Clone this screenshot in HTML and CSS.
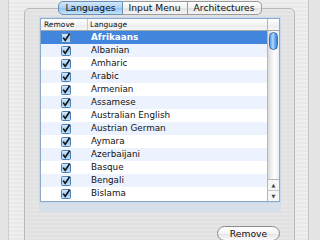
FILE: index.html
```html
<!DOCTYPE html>
<html lang="en">
<head>
    <meta charset="UTF-8">
    <title>Languages</title>
    <link rel="stylesheet" href="styles.css">
</head>
<body>
    <div class="sheet">
        <div class="tab-panel">
            <div class="tabs">
                <div class="tab selected">Languages</div>
                <div class="tab">Input Menu</div>
                <div class="tab">Architectures</div>
            </div>

            <div class="scroll-view">
                <div class="table-area">
                    <div class="table-header">
                        <div class="col-remove">Remove</div>
                        <div class="col-language">Language</div>
                    </div>
                    <div class="rows" id="rows">
                        <!-- rows are filled in below -->
                    </div>
                </div>
                <div class="scrollbar">
                    <div class="scroll-corner"></div>
                    <div class="scroll-track">
                        <div class="scroll-thumb"></div>
                    </div>
                    <div class="scroll-arrows">
                        <div class="arrow">&#9650;</div>
                        <div class="arrow">&#9660;</div>
                    </div>
                </div>
            </div>

            <div class="button-row">
                <button class="push-button">Remove</button>
            </div>
        </div>
    </div>

<script>
    // Language list shown in the table
    const languages = [
        'Afrikaans', 'Albanian', 'Amharic', 'Arabic', 'Armenian', 'Assamese',
        'Australian English', 'Austrian German', 'Aymara', 'Azerbaijani',
        'Basque', 'Bengali', 'Bislama'
    ];

    const checkbox = '<svg width="10" height="10" viewBox="0 0 10 10">' +
        '<defs><linearGradient id="cb" x1="0" y1="0" x2="0" y2="1">' +
        '<stop offset="0" stop-color="#e2f1fd"/><stop offset="0.5" stop-color="#9ccaf2"/>' +
        '<stop offset="1" stop-color="#c4e3fc"/></linearGradient></defs>' +
        '<rect x="0.5" y="0.5" width="9" height="9" rx="1" fill="url(#cb)" stroke="#4f7fb3"/>' +
        '<path d="M2.2 4.6 L4.2 7.4 L8.6 0.8" fill="none" stroke="#111" stroke-width="1.6"/>' +
        '</svg>';

    const rowsElement = document.getElementById('rows');

    languages.forEach(function (name, index) {
        const row = document.createElement('div');
        row.className = 'row' + (index === 0 ? ' selected' : '') + (index % 2 === 1 ? ' odd' : '');
        row.innerHTML = '<div class="col-remove">' + checkbox + '</div>' +
            '<div class="col-language">' + name + '</div>';
        rowsElement.appendChild(row);
    });
</script>
</body>
</html>
```

FILE: styles.css
```css
/* System Preferences style language pane */
body {
    margin: 0;
    padding: 0;
    width: 320px;
    height: 240px;
    overflow: hidden;
    font-family: 'DejaVu Sans', sans-serif;
    font-size: 8.8px;
    color: #111;
    background-color: #e4e4e4;
}

.sheet {
    margin-left: 8px;
    width: 301px;
    height: 240px;
    box-sizing: border-box;
    border-left: 1px solid #cdcdcd;
    border-right: 1px solid #c4c4c4;
    padding: 8px 13px 0 15px;
    background: repeating-linear-gradient(#efefef 0, #efefef 2px, #e9e9e9 2px, #e9e9e9 4px);
}

.tab-panel {
    height: 240px;
    border: 1px solid #b9b9b9;
    border-radius: 5px;
    background: repeating-linear-gradient(#e6e6e6 0, #e6e6e6 2px, #e1e1e1 2px, #e1e1e1 4px);
    padding: 0 14px 0 15px;
}

.tabs {
    display: flex;
    justify-content: center;
    margin-top: -8px;
}

.tab {
    height: 12px;
    line-height: 12px;
    padding: 0 6px;
    font-size: 9.2px;
    border: 1px solid #9a9a9a;
    border-left: none;
    background: linear-gradient(#ffffff, #f1f1f1 50%, #e2e2e2 51%, #f4f4f4);
}

.tab:first-child {
    border-left: 1px solid #8a8a8a;
    border-radius: 5px 0 0 5px;
}

.tab:last-child {
    border-radius: 0 5px 5px 0;
}

.tab.selected {
    background: linear-gradient(#d3e8fa, #a9d1f5 50%, #8ec3f1 51%, #c7e5fb);
    border-color: #6b8fb8;
}

.scroll-view {
    display: flex;
    margin-top: 3px;
    height: 182px;
    border: 1px solid #8aa9cc;
    box-shadow: 0 0 0 1px #c8d9ec, 0 9px 0 1px #d6e0ea;
    background: #fff;
}

.table-area {
    flex: 1;
    overflow: hidden;
}

.table-header {
    display: flex;
    height: 11px;
    line-height: 11px;
    font-size: 7.5px;
    border-bottom: 1px solid #a8a8a8;
    background: linear-gradient(#ffffff, #f3f3f3 50%, #ebebeb 51%, #f6f6f6);
}

.table-header .col-remove {
    border-right: 1px solid #c8c8c8;
    text-align: left;
    padding-left: 3px;
}

.table-header .col-language {
    padding-left: 2px;
}

.col-remove {
    width: 47px;
    box-sizing: border-box;
    flex: none;
    text-align: center;
}

.col-language {
    flex: 1;
    padding-left: 3px;
    white-space: nowrap;
}

.row {
    display: flex;
    align-items: center;
    height: 13px;
    line-height: 13px;
}

.row .col-remove {
    display: flex;
    justify-content: center;
    padding-left: 2px;
}

.row.odd {
    background-color: #edf3fe;
}

.row.selected {
    background-color: #4185dc;
    color: #fff;
    font-weight: bold;
}

.scrollbar {
    width: 11px;
    display: flex;
    flex-direction: column;
    border-left: 1px solid #b6b6b6;
}

.scroll-corner {
    height: 11px;
    border-bottom: 1px solid #a8a8a8;
    background: linear-gradient(#ffffff, #f3f3f3 50%, #ebebeb 51%, #f6f6f6);
}

.scroll-track {
    flex: 1;
    padding: 1px 1px 0 1px;
    background: linear-gradient(90deg, #dadada, #f4f4f4 40%, #ffffff 60%, #ececec);
}

.scroll-thumb {
    height: 18px;
    border-radius: 5px;
    border: 1px solid #3e6ea6;
    box-sizing: border-box;
    background: linear-gradient(90deg, #5d9be0, #b7dbfb 45%, #79b6ef 60%, #3f86d6);
}

.scroll-arrows {
    display: flex;
    flex-direction: column;
    background: #f6f6f6;
    border-top: 1px solid #b6b6b6;
}

.arrow {
    height: 10px;
    line-height: 10px;
    font-size: 5px;
    text-align: center;
    color: #444;
}

.arrow + .arrow {
    border-top: 1px solid #c6c6c6;
}

.button-row {
    display: flex;
    justify-content: flex-end;
    margin-top: 24px;
}

.push-button {
    width: 63px;
    height: 15px;
    padding: 0;
    font-family: 'DejaVu Sans', sans-serif;
    font-size: 9.2px;
    color: #111;
    border: 1px solid #8a8a8a;
    border-radius: 8px;
    background: linear-gradient(#ffffff, #f4f4f4 50%, #e4e4e4 51%, #fafafa);
}
```
